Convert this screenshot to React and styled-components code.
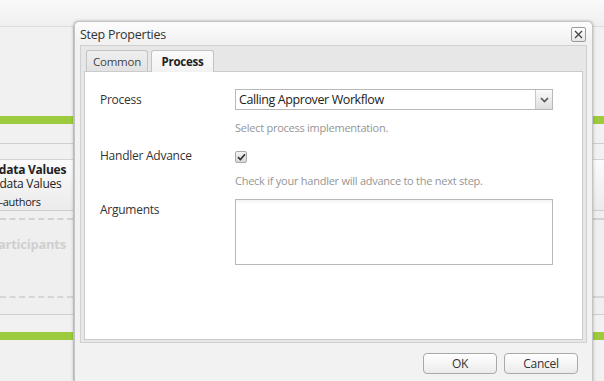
import React from 'react';
import styled, { createGlobalStyle } from 'styled-components';

const GlobalStyle = createGlobalStyle`
  html, body {
    margin: 0;
    padding: 0;
    width: 604px;
    height: 381px;
    overflow: hidden;
    background: #f0f0f0;
    font-family: "Open Sans", "Noto Sans", sans-serif;
  }
`;

const Page = styled.div`
  position: relative;
  width: 604px;
  height: 381px;
  overflow: hidden;
  background: #efefef;
  letter-spacing: -0.25px;
`;

const Header = styled.div`
  height: 26px;
  background: linear-gradient(#fafafa, #efefef);
  border-bottom: 1px solid #dcdcdc;
`;

const Canvas = styled.div`
  display: grid;
  grid-template-columns: 74px 1fr 12px;
`;

const Side = styled.div`
  display: flex;
  flex-direction: column;
  overflow: hidden;
  border-right: ${(p) => (p.$right ? 'none' : '1px solid #d6d6d6')};
  border-left: ${(p) => (p.$right ? '1px solid #d6d6d6' : 'none')};
`;

const Spacer = styled.div`
  height: ${(p) => p.$h}px;
  background: ${(p) => p.$bg || '#f1f1f1'};
  border-bottom: ${(p) => (p.$line ? '1px solid #cfcfcf' : 'none')};
`;

const GreenBar = styled.div`
  height: 8px;
  background: #9ccb3e;
`;

const Card = styled.div`
  height: 52px;
  background: linear-gradient(#fbfbfb, #ebebeb);
  border-top: 1px solid #d4d4d4;
  border-bottom: 1px solid #cfcfcf;
  padding-top: 3px;
  box-sizing: border-box;
  white-space: nowrap;
  color: #222;
`;

const CardTitle = styled.div`
  font-size: 12px;
  font-weight: bold;
  line-height: 14px;
  margin-left: ${(p) => p.$shift}px;
`;

const CardLine = styled.div`
  font-size: 12px;
  line-height: 14px;
  margin-left: ${(p) => p.$shift}px;
`;

const CardMeta = styled.div`
  font-size: 11px;
  line-height: 14px;
  margin-top: 4px;
  margin-left: ${(p) => p.$shift}px;
`;

const Lane = styled.div`
  height: 80px;
  box-sizing: border-box;
  border-top: 2px dashed #d2d2d2;
  border-bottom: 2px dashed #d6d6d6;
  margin: 7px 0 16px;
  padding-top: 15px;
  white-space: nowrap;
`;

const LaneTitle = styled.div`
  font-size: 13px;
  font-weight: bold;
  color: #cfcfcf;
  margin-left: -10px;
`;

const Dialog = styled.div`
  position: absolute;
  left: 74px;
  top: 21px;
  width: 519px;
  height: 372px;
  box-sizing: border-box;
  border: 1px solid #c4c4c4;
  border-radius: 5px 5px 0 0;
  background: #f2f2f2;
  box-shadow: -1px 0 3px rgba(0, 0, 0, 0.18), 1px 0 3px rgba(0, 0, 0, 0.12);
  display: flex;
  flex-direction: column;
  padding: 0 5px 0 5px;
`;

const TitleBar = styled.div`
  height: 23px;
  display: flex;
  align-items: center;
  justify-content: space-between;
  margin: 0 -5px;
  padding: 0 5px 0 5px;
  background: linear-gradient(#fdfdfd, #f0f0f0);
  border-radius: 5px 5px 0 0;
`;

const Title = styled.div`
  font-size: 12.5px;
  color: #333;
  padding-top: 1px;
`;

const CloseButton = styled.div`
  width: 13px;
  height: 13px;
  border: 1px solid #9a9a9a;
  border-radius: 2px;
  background: linear-gradient(#ffffff, #e6e6e6);
  display: flex;
  align-items: center;
  justify-content: center;
  margin-top: 1px;
  margin-right: 1px;
`;

const TabPanel = styled.div`
  border: 1px solid #d0d0d0;
  background: #e7e7e7;
  display: flex;
  flex-direction: column;
  height: 296px;
`;

const TabStrip = styled.div`
  display: flex;
  align-items: flex-end;
  gap: 3px;
  height: 25px;
  padding-left: 5px;
`;

const Tab = styled.div`
  width: ${(p) => p.$w}px;
  height: ${(p) => (p.$active ? 22 : 21)}px;
  box-sizing: border-box;
  border: 1px solid #c3c3c3;
  border-bottom: none;
  border-radius: 3px 3px 0 0;
  background: ${(p) => (p.$active ? 'linear-gradient(#fbfbfb, #f2f2f2)' : 'linear-gradient(#efefef, #e2e2e2)')};
  font-size: 11.5px;
  font-weight: ${(p) => (p.$active ? 'bold' : 'normal')};
  color: ${(p) => (p.$active ? '#222' : '#444')};
  display: flex;
  align-items: center;
  justify-content: center;
  margin-bottom: ${(p) => (p.$active ? -1 : 0)}px;
  position: relative;
`;

const Body = styled.div`
  flex: 1;
  margin: 0 3px 2px 3px;
  background: #fff;
  border: 1px solid #cbcbcb;
  padding: 17px 29px 0 15px;
  display: grid;
  grid-template-columns: 135px 1fr;
  align-content: start;
`;

const Label = styled.div`
  font-size: 12px;
  color: #333;
  line-height: 21px;
  padding-top: ${(p) => p.$pt || 0}px;
`;

const Field = styled.div`
  display: flex;
  flex-direction: column;
  padding-top: ${(p) => p.$pt || 0}px;
`;

const Select = styled.div`
  height: 21px;
  box-sizing: border-box;
  border: 1px solid #b8b8b8;
  display: flex;
  align-items: center;
  justify-content: space-between;
  background: #fff;
`;

const SelectText = styled.span`
  font-size: 12.5px;
  color: #222;
  padding-left: 3px;
  letter-spacing: -0.4px;
`;

const Arrow = styled.div`
  width: 16px;
  height: 19px;
  border-left: 1px solid #c8c8c8;
  background: linear-gradient(#fafafa, #dedede);
  display: flex;
  align-items: center;
  justify-content: center;
`;

const Help = styled.div`
  font-size: 11px;
  color: #959595;
  margin-top: 10px;
  height: 16px;
`;

const Check = styled.div`
  width: 12px;
  height: 12px;
  box-sizing: border-box;
  border: 1px solid #aaa;
  border-radius: 2px;
  background: linear-gradient(#f4f4f4, #d6d6d6);
  display: flex;
  align-items: center;
  justify-content: center;
  margin-top: 6px;
`;

const TextArea = styled.div`
  height: 66px;
  box-sizing: border-box;
  border: 1px solid #b8b8b8;
  background: linear-gradient(#f3f3f3 0, #fff 4px);
  margin-top: 10px;
`;

const Footer = styled.div`
  display: flex;
  justify-content: flex-end;
  gap: 7px;
  padding: 10px 9px 0 0;
`;

const Button = styled.div`
  width: 74px;
  height: 21px;
  box-sizing: border-box;
  border: 1px solid #a9a9a9;
  border-radius: 4px;
  background: linear-gradient(#ffffff, #ebebeb);
  font-size: 12px;
  color: #333;
  display: flex;
  align-items: center;
  justify-content: center;
`;

const Background = ({ right }) => (
  <Side $right={right}>
    <Spacer $h={89} />
    <GreenBar />
    <Spacer $h={19} $line />
    <Spacer $h={15} />
    {right ? (
      <Card />
    ) : (
      <Card>
        <CardTitle $shift={-31}>Metadata Values</CardTitle>
        <CardLine $shift={-28}>Metadata Values</CardLine>
        <CardMeta $shift={-12}>co-authors</CardMeta>
      </Card>
    )}
    <Lane>{!right && <LaneTitle>Participants</LaneTitle>}</Lane>
    <Spacer $h={1} $bg="#cfcfcf" />
    <Spacer $h={17} />
    <GreenBar />
    <Spacer $h={40} />
  </Side>
);

export default function App() {
  return (
    <Page>
      <GlobalStyle />
      <Header />
      <Canvas>
        <Background />
        <div />
        <Background right />
      </Canvas>
      <Dialog>
        <TitleBar>
          <Title>Step Properties</Title>
          <CloseButton>
            <svg width="9" height="9" viewBox="0 0 9 9">
              <path d="M1 1 L8 8 M8 1 L1 8" stroke="#444" strokeWidth="1.3" />
            </svg>
          </CloseButton>
        </TitleBar>
        <TabPanel>
          <TabStrip>
            <Tab $w={62}>Common</Tab>
            <Tab $w={63} $active>Process</Tab>
          </TabStrip>
          <Body>
            <Label>Process</Label>
            <Field>
              <Select>
                <SelectText>Calling Approver Workflow</SelectText>
                <Arrow>
                  <svg width="9" height="6" viewBox="0 0 9 6">
                    <path d="M1 1 L4.5 4.5 L8 1" stroke="#555" strokeWidth="1.6" fill="none" />
                  </svg>
                </Arrow>
              </Select>
              <Help>Select process implementation.</Help>
            </Field>
            <Label $pt={9}>Handler Advance</Label>
            <Field $pt={9}>
              <Check>
                <svg width="9" height="8" viewBox="0 0 9 8">
                  <path d="M1 4.2 L3.4 6.6 L8 1.2" stroke="#333" strokeWidth="1.7" fill="none" />
                </svg>
              </Check>
              <Help>Check if your handler will advance to the next step.</Help>
            </Field>
            <Label $pt={10}>Arguments</Label>
            <Field>
              <TextArea />
            </Field>
          </Body>
        </TabPanel>
        <Footer>
          <Button>OK</Button>
          <Button>Cancel</Button>
        </Footer>
      </Dialog>
    </Page>
  );
}
